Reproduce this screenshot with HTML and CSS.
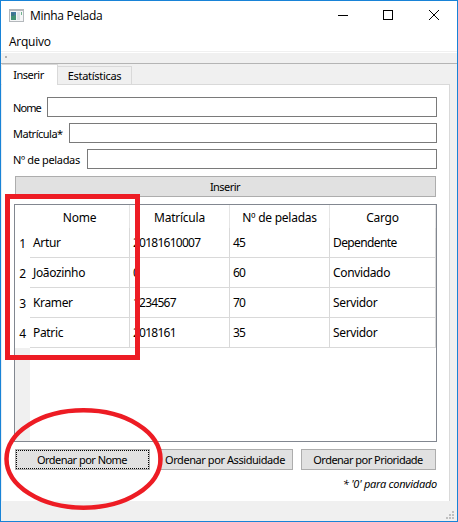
FILE: index.html
```html
<!DOCTYPE html>
<html lang="pt-BR">
<head>
<meta charset="utf-8">
<title>Minha Pelada</title>
<link rel="stylesheet" href="styles.css">
</head>
<body>
<div class="window">
  <header class="titlebar">
    <svg class="app-icon" width="15" height="13" viewBox="0 0 15 13" shape-rendering="crispEdges">
      <path fill="#b4b8bc" d="M0 0h15v13H0z"/><path fill="#f5f6f7" d="M1 2h13v10H1z"/>
      <path fill="#4179a0" d="M2 3h5v4H2z"/><path fill="#429174" d="M2 6h5v5H2z"/><path fill="#3e7489" d="M2 4h3v3H2z"/>
      <path fill="#dce2e5" d="M8 3h3v8H8z"/><path fill="#70b48d" d="M12 3h1v3h-1z"/>
    </svg>
    <h1 class="title">Minha Pelada</h1>
    <svg class="controls" width="102" height="12" viewBox="0 0 102 12" fill="none" stroke="#000">
      <path d="M0 6.5h10M45.500 1.500h9v9h-9z" shape-rendering="crispEdges"/>
      <path d="M91 1l10 10M101 1L91 11"/>
    </svg>
  </header>
  <nav class="menubar"><span>Arquivo</span></nav>
  <div class="toolbar"><i class="handle"></i></div>
  <div class="tabs">
    <div class="tab active">Inserir</div>
    <div class="tab">Estatísticas</div>
  </div>
  <main class="panel">
    <label class="field"><span class="l-nome">Nome</span><input></label>
    <label class="field"><span class="l-matricula">Matrícula*</span><input></label>
    <label class="field"><span class="l-peladas">Nº de peladas</span><input></label>
    <button class="insert">Inserir</button>
    <div class="table">
      <div class="row head"><b></b><span>Nome</span><span>Matrícula</span><span>Nº de peladas</span><span>Cargo</span></div>
      <div class="row"><b>1</b><span>Artur</span><span class="num">20181610007</span><span class="num">45</span><span class="wide">Dependente</span></div>
      <div class="row"><b>2</b><span>Joãozinho</span><span class="num">0</span><span class="num">60</span><span>Convidado</span></div>
      <div class="row"><b>3</b><span>Kramer</span><span class="num">1234567</span><span class="num">70</span><span>Servidor</span></div>
      <div class="row"><b>4</b><span>Patric</span><span class="num">2018161</span><span class="num">35</span><span>Servidor</span></div>
      <div class="gutter"></div>
    </div>
    <div class="actions">
      <button class="focused">Ordenar por Nome</button>
      <button class="assiduity">Ordenar por Assiduidade</button>
      <button>Ordenar por Prioridade</button>
    </div>
    <p class="note">* '0' para convidado</p>
  </main>
  <footer class="statusbar">
    <svg width="8" height="8" viewBox="0 0 8 8" fill="#bfbfbf"><path d="M6 0h2v2H6zM3 3h2v2H3zM6 3h2v2H6zM0 6h2v2H0zM3 6h2v2H3zM6 6h2v2H6z"/></svg>
  </footer>
  <svg class="marks" width="458" height="522" viewBox="0 0 458 522" fill="none" stroke="#ed1c24">
    <rect x="7.500" y="196.500" width="130" height="161" stroke-width="5" shape-rendering="crispEdges"/>
    <ellipse cx="83.500" cy="459" rx="77" ry="48.700" stroke-width="4.500"/>
  </svg>
</div>
</body>
</html>
```
FILE: styles.css
```css
* { box-sizing: border-box; }
body { margin: 0; font: 11px/16px "Noto Sans", sans-serif; letter-spacing: -0.5px; color: #000; }
.window { position: relative; width: 458px; height: 522px; border: 1px solid #1883d7; background: linear-gradient(90deg, #fff 449px, #f0f0f0 449px); display: flex; flex-direction: column; overflow: hidden; }
.titlebar { height: 30px; display: flex; align-items: center; padding: 0 17px 0 8px; background: #fff; }
.app-icon { margin-top: -2px; }
.title { margin: 0 auto 0 6px; font: 12px/16px "Open Sans", sans-serif; letter-spacing: -0.3px; }
.controls { margin-top: -2px; }
.menubar { height: 20px; padding: 3px 8px 0; font: 12px/16px "Open Sans", sans-serif; letter-spacing: -0.25px; background: #fff; }
.toolbar { height: 13px; border-top: 1px solid #f0f0f0; border-bottom: 1px solid #b4b4b4; background: linear-gradient(#fff 1px, #f0f0f0 1px); padding: 4px 4px 0; }
.handle { display: block; width: 2px; height: 2px; background: #b0b0b0; }
.tabs { height: 20px; display: flex; align-items: flex-end; background: #f0f0f0; padding-left: 1px; }
.tab { height: 18px; width: 74px; border: 1px solid #d9d9d9; border-width: 1px 1px 0 0; text-align: center; line-height: 18px; letter-spacing: -0.3px; white-space: nowrap; }
.tab.active { height: 21px; width: 56px; margin-bottom: -1px; padding-right: 2px; line-height: 20px; letter-spacing: -0.5px; background: #fff; position: relative; }
.panel { width: 449px; height: 417px; border: 1px solid #d9d9d9; border-bottom: 0; border-left-color: #e8eef4; padding: 12px 12px 0 11px; }
.field { display: flex; height: 20px; margin-bottom: 6px; line-height: 21px; white-space: nowrap; }
.field input { flex: 1; min-width: 0; border: 1px solid #7a7a7a; padding: 0; background: #fff; }
.l-nome { width: 34px; letter-spacing: -0.9px; }
.l-matricula { width: 56px; letter-spacing: -0.5px; }
.l-peladas { width: 74px; letter-spacing: -0.35px; }
button { height: 21px; border: 1px solid #adadad; background: #e1e1e1; padding: 0 1px 0 0; font: 11px/19px "Noto Sans", sans-serif; letter-spacing: -0.53px; color: #000; white-space: nowrap; }
.insert { display: block; width: 421px; margin: 7px 0 0 2px; }
.table { width: 423px; height: 238px; margin: 7px 0 0 1px; border: 1px solid #828790; display: flex; flex-direction: column; font-size: 12px; letter-spacing: -0.35px; }
.row { flex: none; display: grid; grid-template: 30px / 15px 100px 100px 100px 106px; line-height: 30px; }
.row b { font-weight: 400; text-align: center; line-height: 32px; }
.row span { border-right: 1px solid #d9d9d9; border-bottom: 1px solid #d9d9d9; padding-left: 3px; white-space: nowrap; }
.row .num { letter-spacing: -0.75px; }
.row .wide { letter-spacing: -0.6px; }
.row.head { grid-template-rows: 23px; line-height: 25px; letter-spacing: -0.25px; }
.row.head span { border-bottom: 0; padding: 0; text-align: center; border-color: #e5e5e5; }
.gutter { flex: 1; width: 15px; background: #f0f0f0; }
.actions { display: flex; gap: 8px; margin: 7px 0 0 2px; }
.actions button { width: 135px; }
.actions .assiduity { letter-spacing: -0.43px; }
.focused { outline: 1px dotted #000; outline-offset: -2px; }
.note { margin: 6px 0 0; text-align: right; font-style: italic; letter-spacing: -0.25px; }
.statusbar { flex: 1; background: #f0f0f0; display: flex; justify-content: flex-end; align-items: flex-end; padding: 0 3px 2px; }
.marks { position: absolute; left: -1px; top: -1px; }
```
